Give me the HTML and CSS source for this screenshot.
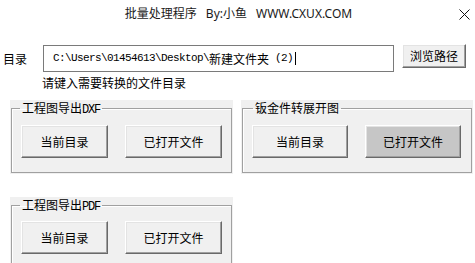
FILE: index.html
```html
<!DOCTYPE html>
<html lang="zh">
<head>
<meta charset="utf-8">
<link rel="stylesheet" href="styles.css">
</head>
<body>
<div class="titlebar">
  <div></div>
  <div class="title"><span>批量处理程序</span><span>By:小鱼</span><span>WWW.CXUX.COM</span></div>
  <svg class="close" width="11" height="11" viewBox="0 0 11 11"><path d="M0.5 0.5 L10.5 10.5 M10.5 0.5 L0.5 10.5" stroke="#111" stroke-width="1" fill="none"/></svg>
</div>
<div class="main">
  <div class="row1">
    <div class="label">目录</div>
    <div class="input"><span class="mono">C:\Users\01454613\Desktop\</span><span class="cjk">新建文件夹</span><span class="mono"> (2)</span><span class="caret"></span></div>
    <div class="btn browse">浏览路径</div>
  </div>
  <div class="hint">请键入需要转换的文件目录</div>
  <div class="groups">
    <div class="group g1">
      <fieldset>
        <legend>工程图导出<span class="lmono">DXF</span></legend>
        <div class="btns">
          <div class="btn b1">当前目录</div>
          <div class="btn b2">已打开文件</div>
        </div>
      </fieldset>
    </div>
    <div class="group g2">
      <fieldset>
        <legend>钣金件转展开图</legend>
        <div class="btns">
          <div class="btn b3">当前目录</div>
          <div class="btn b3 pressed">已打开文件</div>
        </div>
      </fieldset>
    </div>
  </div>
  <div class="group g1 g3">
    <fieldset>
      <legend>工程图导出<span class="lmono">PDF</span></legend>
      <div class="btns">
        <div class="btn b1">当前目录</div>
        <div class="btn b2">已打开文件</div>
      </div>
    </fieldset>
  </div>
</div>
</body>
</html>
```
FILE: styles.css
```css
html, body {
  margin: 0;
  padding: 0;
  background: #ffffff;
  overflow: hidden;
}
body {
  width: 475px;
  height: 263px;
  font-family: "Noto Sans", "Noto Sans CJK SC", sans-serif;
  font-size: 12px;
  color: #000;
}
.titlebar {
  display: grid;
  grid-template-columns: 1fr auto 1fr;
  align-items: center;
  height: 27px;
}
.title {
  display: flex;
  gap: 9px;
  color: #1a1a1a;
  font-size: 12px;
  line-height: 16px;
  margin-left: 2px;
}
.close {
  justify-self: end;
  margin-right: 5px;
  margin-top: 1px;
}
.main {
  padding-top: 17px;
}
.row1 {
  display: flex;
  align-items: flex-start;
  padding-left: 3px;
  height: 28px;
}
.label {
  width: 40px;
  line-height: 27px;
  margin-top: 1px;
  font-family: "Noto Sans CJK SC", sans-serif;
}
.input {
  box-sizing: border-box;
  width: 351px;
  height: 27px;
  margin-top: 1px;
  border: 1px solid #7a7a7a;
  background: #fff;
  display: flex;
  align-items: center;
  padding-left: 9px;
  padding-bottom: 1px;
  white-space: pre;
}
.mono {
  font-family: "Liberation Mono", monospace;
  font-size: 11px;
  letter-spacing: -0.6px;
}
.cjk {
  font-family: "Noto Sans CJK SC", sans-serif;
  font-size: 12px;
}
.caret {
  width: 1px;
  height: 13px;
  background: #000;
  margin-left: 2px;
}
.btn {
  box-sizing: border-box;
  display: flex;
  align-items: center;
  justify-content: center;
  background: #f0f0f0;
  border-top: 1px solid #ffffff;
  border-left: 1px solid #ffffff;
  border-right: 1px solid #696969;
  border-bottom: 1px solid #696969;
  box-shadow: inset -1px -1px 0 #a0a0a0, inset 1px 1px 0 #e3e3e3;
  font-family: "Noto Sans CJK SC", sans-serif;
  font-size: 12px;
}
.browse {
  width: 64px;
  height: 24px;
  margin-left: 8px;
  padding-bottom: 1px;
}
.hint {
  margin-left: 42px;
  margin-top: 3px;
  line-height: 16px;
  font-family: "Noto Sans CJK SC", sans-serif;
}
.groups {
  display: flex;
  gap: 8px;
  margin-top: 9px;
  padding-left: 10px;
}
.group {
  background: #f0f0f0;
  padding: 0 1px 1px 1px;
  box-sizing: border-box;
}
.g1 { width: 223px; }
.g2 { width: 232px; }
.g3 {
  margin-left: 10px;
  margin-top: 23px;
}
fieldset {
  margin: 0;
  border: 1px solid #a0a0a0;
  box-shadow: inset 1px 1px 0 #ffffff;
  padding: 9px 8px 14px 8px;
}
.g3 fieldset {
  padding-top: 8px;
  padding-bottom: 14px;
}
legend {
  padding: 0 2px;
  margin-left: 0;
  line-height: 16px;
  height: 16px;
  font-family: "Noto Sans CJK SC", sans-serif;
  font-size: 12px;
}
.lmono {
  font-family: "Liberation Mono", monospace;
  font-size: 12px;
  letter-spacing: -1.2px;
  line-height: 10px;
}
.g2 legend { margin-left: 2px; }
.btns {
  display: flex;
  gap: 17px;
  margin-left: 1px;
}
.b1 { width: 87px; height: 33px; }
.b2 { width: 97px; height: 33px; }
.b3 { width: 96px; height: 33px; }
.pressed {
  background: #c6c6c6;
}
```
